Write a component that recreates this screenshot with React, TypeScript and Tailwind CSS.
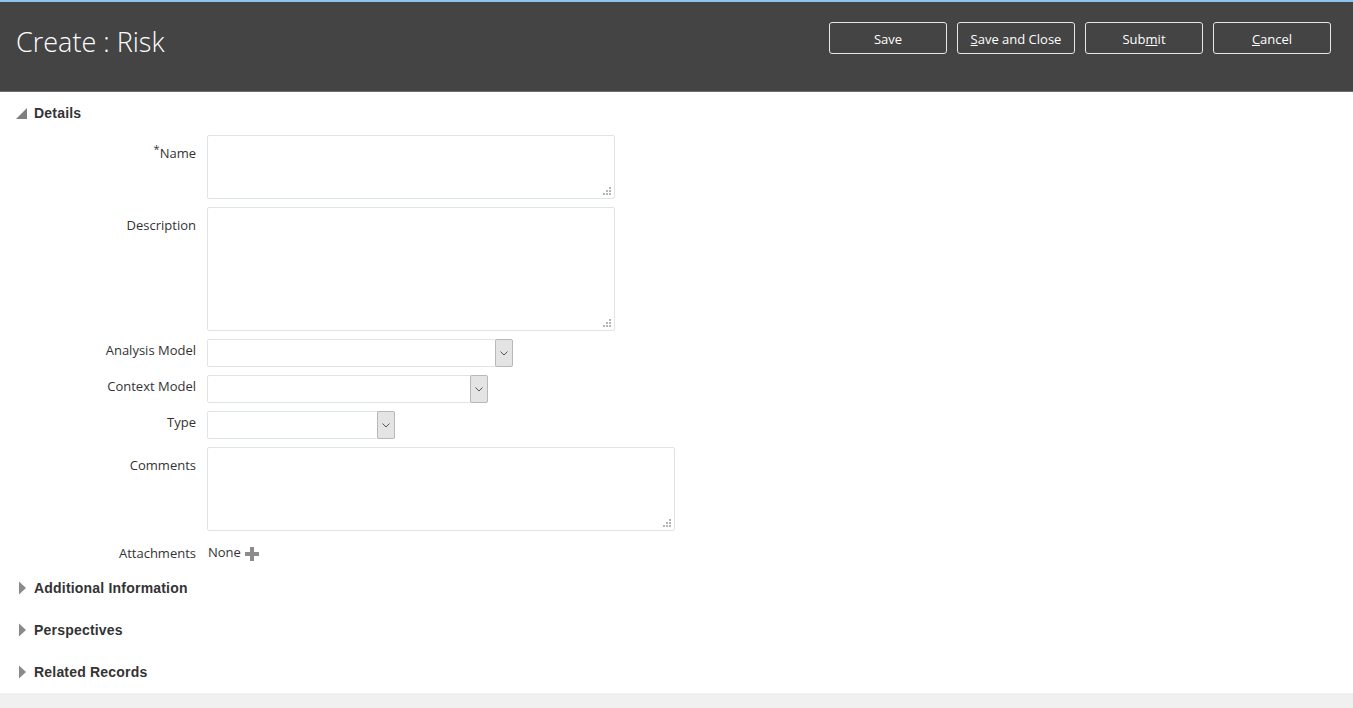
import type { ReactNode } from "react";

const font = { fontFamily: '"Open Sans", "Liberation Sans", sans-serif' };

const Grip = () => (
   <svg
      width="8"
      height="8"
      viewBox="0 0 8 8"
      className="absolute right-[3px] bottom-[3px]"
   >
      <rect x="6" y="0" width="2" height="2" fill="#b5b5b5" />
      <rect x="3" y="3" width="2" height="2" fill="#b5b5b5" />
      <rect x="6" y="3" width="2" height="2" fill="#b5b5b5" />
      <rect x="0" y="6" width="2" height="2" fill="#b5b5b5" />
      <rect x="3" y="6" width="2" height="2" fill="#b5b5b5" />
      <rect x="6" y="6" width="2" height="2" fill="#b5b5b5" />
   </svg>
);

const TextBox = ({ w, h }: { w: string; h: string }) => (
   <div
      className={`relative ${w} ${h} border border-[#dfe4e7] rounded-[2px] bg-white`}
   >
      <Grip />
   </div>
);

const SelectBox = ({ w }: { w: string }) => (
   <div
      className={`${w} h-[28px] flex border border-[#dfe4e7] rounded-[2px] bg-white`}
   >
      <div className="flex-1" />
      <div className="w-[18px] -my-px -mr-px flex items-center justify-center bg-[#e4e4e4] border border-[#b8b8b8] rounded-[2px]">
         <svg width="8" height="5" viewBox="0 0 8 5">
            <path d="M0.5 0.5 L4 4 L7.5 0.5" stroke="#555" fill="none" strokeWidth="1" />
         </svg>
      </div>
   </div>
);

// kind: "top" for textareas, "sel" for dropdowns, "plain" for text rows
const Row = ({
   label,
   kind,
   children,
}: {
   label: ReactNode;
   kind: "top" | "sel" | "plain";
   children: ReactNode;
}) => (
   <div className="flex">
      <div
         className={`w-[196px] shrink-0 text-right text-[13px] text-[#333] ${
            kind === "top"
               ? "pt-[9px] leading-[18px]"
               : kind === "sel"
                 ? "leading-[23px]"
                 : "leading-[28px]"
         }`}
      >
         {label}
      </div>
      <div className="ml-[11px]">{children}</div>
   </div>
);

const Section = ({ title, open }: { title: string; open?: boolean }) => (
   <div className="h-[42px] flex items-center pl-[16px]">
      {open ? (
         <svg width="11" height="11" viewBox="0 0 11 11" className="mr-[7px]">
            <path d="M11 0 L11 11 L0 11 Z" fill="#7f7f7f" />
         </svg>
      ) : (
         <svg width="11" height="14" viewBox="0 0 11 14" className="mr-[7px]">
            <path d="M3 0.5 L10 7 L3 13.5 Z" fill="#8a8a8a" />
         </svg>
      )}
      <span
         className="text-[14px] font-bold text-[#333] tracking-[0.2px]"
         style={{ fontFamily: '"Liberation Sans", Arial, sans-serif' }}
      >
         {title}
      </span>
   </div>
);

const HeadButton = ({ children }: { children: ReactNode }) => (
   <button className="w-[118px] h-[32px] pt-[3px] border border-[#e6e6e6] rounded-[3px] text-white text-[13px] bg-transparent">
      {children}
   </button>
);

const App = () => {
   return (
      <div className="w-full min-h-[708px] bg-white flex flex-col" style={font}>
         <div className="h-[92px] bg-[#444444] border-t-2 border-[#8cc4ee] border-b border-b-[#6e6e6e] flex items-start justify-between shrink-0">
            <h1 className="ml-[16px] mt-[22px] text-[27px] font-light text-white leading-[36px]">
               Create : Risk
            </h1>
            <div className="flex gap-[10px] mt-[20px] mr-[22px]">
               <HeadButton>Save</HeadButton>
               <HeadButton>
                  <u>S</u>ave and Close
               </HeadButton>
               <HeadButton>
                  Sub<u>m</u>it
               </HeadButton>
               <HeadButton>
                  <u>C</u>ancel
               </HeadButton>
            </div>
         </div>

         <Section title="Details" open />
         <div className="flex flex-col gap-[8px] mt-px">
            <Row
               label={
                  <>
                     <sup className="text-[11px] text-[#333]">*</sup>Name
                  </>
               }
               kind="top"
            >
               <TextBox w="w-[408px]" h="h-[64px]" />
            </Row>
            <Row label="Description" kind="top">
               <TextBox w="w-[408px]" h="h-[124px]" />
            </Row>
            <Row label="Analysis Model" kind="sel">
               <SelectBox w="w-[306px]" />
            </Row>
            <Row label="Context Model" kind="sel">
               <SelectBox w="w-[281px]" />
            </Row>
            <Row label="Type" kind="sel">
               <SelectBox w="w-[188px]" />
            </Row>
            <Row label="Comments" kind="top">
               <TextBox w="w-[468px]" h="h-[84px]" />
            </Row>
            <Row label="Attachments" kind="plain">
               <div className="flex items-center h-[28px] text-[13px] text-[#333]">
                  <span className="ml-px">None</span>
                  <svg width="14" height="14" viewBox="0 0 14 14" className="ml-[4px] mt-px">
                     <rect x="5" y="0" width="4" height="14" fill="#8c8c8c" />
                     <rect x="0" y="5" width="14" height="4" fill="#8c8c8c" />
                  </svg>
               </div>
            </Row>
         </div>
         <Section title="Additional Information" />
         <Section title="Perspectives" />
         <Section title="Related Records" />
         <div className="flex-1 bg-[#f0f0f0] min-h-[15px]" />
      </div>
   );
};

export default App;
